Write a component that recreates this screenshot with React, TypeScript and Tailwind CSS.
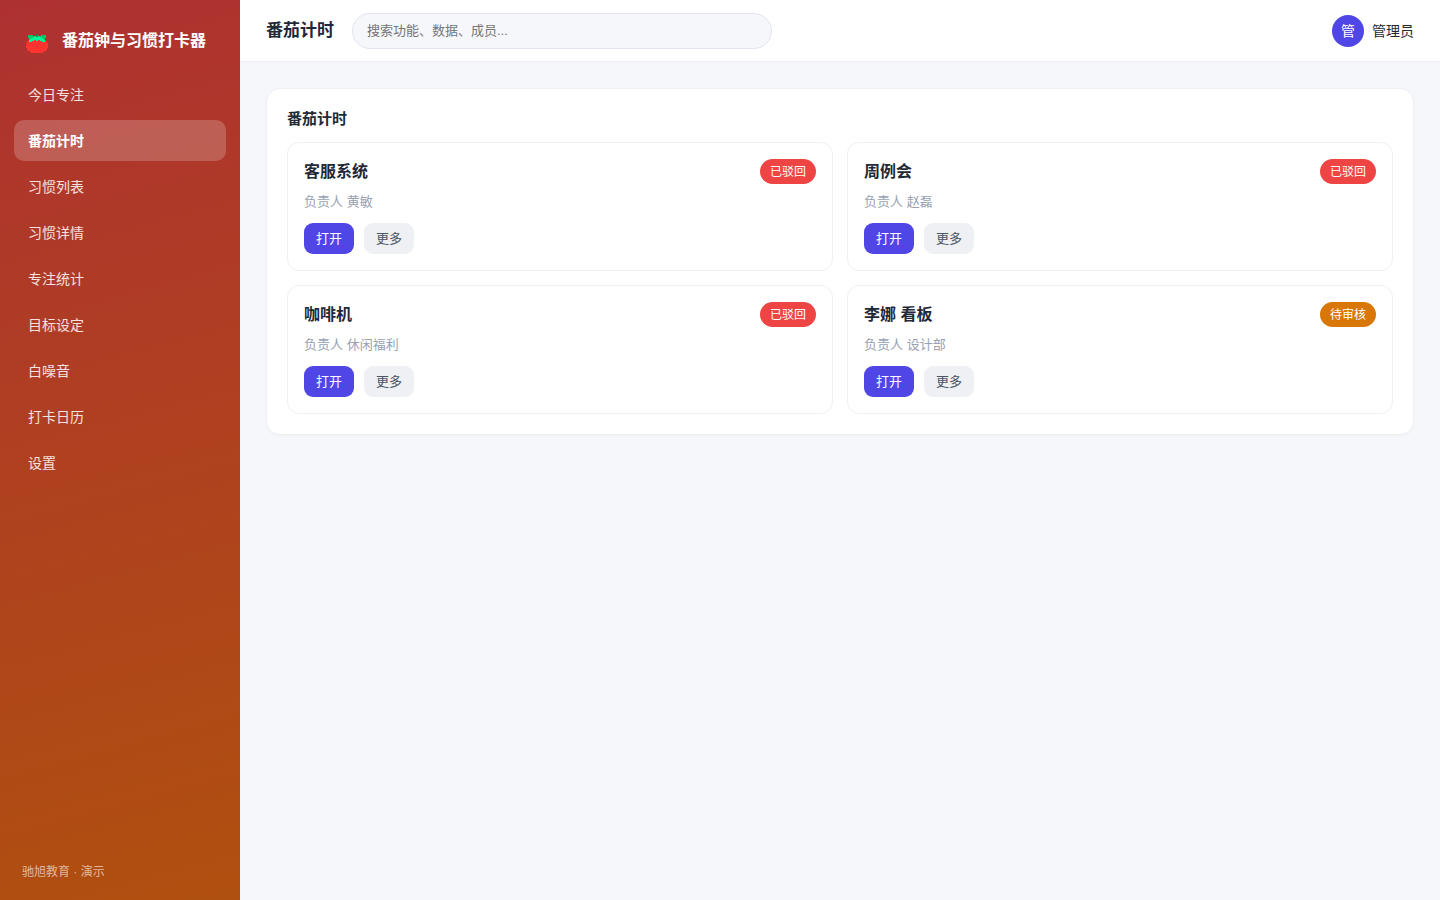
import clsx from "clsx";

interface IRecord {
  id: number;
  title: string;
  owner: string;
  status: "rejected" | "pending";
}

const navItems = [
  "今日专注",
  "番茄计时",
  "习惯列表",
  "习惯详情",
  "专注统计",
  "目标设定",
  "白噪音",
  "打卡日历",
  "设置",
];

const records: IRecord[] = [
  { id: 1, title: "客服系统", owner: "黄敏", status: "rejected" },
  { id: 2, title: "周例会", owner: "赵磊", status: "rejected" },
  { id: 3, title: "咖啡机", owner: "休闲福利", status: "rejected" },
  { id: 4, title: "李娜 看板", owner: "设计部", status: "pending" },
];

const statusMap = {
  rejected: { label: "已驳回", className: "bg-[#ef4444]" },
  pending: { label: "待审核", className: "bg-[#d97706]" },
};

function TomatoIcon() {
  return (
    <svg
      viewBox="0 0 22 20"
      className="h-5 w-[22px] shrink-0 self-end"
      shapeRendering="crispEdges"
      aria-hidden="true"
    >
      <path
        d="M3 5h16v1h1v1h1v2h1v5h-1v2h-1v1h-2v1h-1v1H5v-1H4v-1H2v-1H1v-2H0V9h1V7h1V6h1z"
        fill="#ff332f"
      />
      <path d="M7 2h8v1h2v1h1v1h1v3h-3V7h-2V6h-2v1h-2V6H8v1H6v1H3V5h2V4h1V3h1z" fill="#00f59b" />
      <path d="M2 1h5v1h2v1H7v1H5v1H4v1H3V4H2zM20 1h-5v1h-2v1h2v1h2v1h1v1h1V4h1z" fill="#08c768" />
      <path d="M10 0h2v3h-2z" fill="#078f58" />
    </svg>
  );
}

function Sidebar({ active }: { active: string }) {
  return (
    <aside className="flex w-60 shrink-0 flex-col bg-[linear-gradient(165deg,#ae3131_0%,#b0500f_100%)] px-[14px] pt-7 pb-5 text-white">
      <div className="mb-5 flex h-[26px] items-center gap-[14px] px-3">
        <TomatoIcon />
        <span className="text-base font-bold whitespace-nowrap">番茄钟与习惯打卡器</span>
      </div>
      <nav className="flex flex-col gap-[5px]">
        {navItems.map((item) => (
          <a
            key={item}
            href="#"
            className={clsx(
              "flex h-[41px] items-center rounded-[10px] px-[14px] text-sm",
              item === active ? "bg-white/20 font-bold text-white" : "text-white/85"
            )}
          >
            {item}
          </a>
        ))}
      </nav>
      <div className="mt-auto px-2 text-xs leading-4 text-white/60">驰旭教育 · 演示</div>
    </aside>
  );
}

function Header({ title }: { title: string }) {
  return (
    <header className="flex h-[62px] items-center gap-[18px] border-b border-[#eceef3] bg-white px-[26px]">
      <h1 className="text-[17px] font-bold">{title}</h1>
      <input
        type="search"
        aria-label="搜索"
        placeholder="搜索功能、数据、成员..."
        className="h-9 w-[420px] rounded-full border border-[#e2e5ee] bg-[#f5f7fb] px-[14px] text-[13px] outline-none placeholder:text-[#757575]"
      />
      <div className="ml-auto flex items-center gap-2 text-sm">
        <div className="flex size-8 items-center justify-center rounded-full bg-[#4f46e5] text-white">管</div>
        <span>管理员</span>
      </div>
    </header>
  );
}

function RecordCard({ record }: { record: IRecord }) {
  const status = statusMap[record.status];
  return (
    <article className="rounded-xl border border-[#eef0f4] p-4">
      <div className="flex items-center justify-between">
        <h3 className="text-base font-bold">{record.title}</h3>
        <span
          className={clsx("flex h-[25px] items-center rounded-full px-[10px] text-xs text-white", status.className)}
        >
          {status.label}
        </span>
      </div>
      <p className="mt-2 text-[13px] leading-5 text-[#98a1b2]">负责人 {record.owner}</p>
      <div className="mt-[11px] flex gap-[10px] text-[13px]">
        <button type="button" className="h-[31px] rounded-[9px] bg-[#4f46e5] px-3 text-white">
          打开
        </button>
        <button type="button" className="h-[31px] rounded-[9px] bg-[#eef0f4] px-3 text-[#475569]">
          更多
        </button>
      </div>
    </article>
  );
}

export default function App() {
  return (
    <div className="flex min-h-screen bg-[#f5f7fb] font-['Liberation_Sans','Noto_Sans_CJK_SC',sans-serif] text-[#1f2937]">
      <Sidebar active="番茄计时" />
      <div className="min-w-0 flex-1">
        <Header title="番茄计时" />
        <main className="p-[26px]">
          <section className="rounded-[14px] border border-[#eef0f4] bg-white p-5 shadow-[0_1px_3px_rgba(0,0,0,0.03)]">
            <h2 className="mb-[14px] text-[15px] leading-[19px] font-bold">番茄计时</h2>
            <div className="grid grid-cols-2 gap-[14px]">
              {records.map((record) => (
                <RecordCard key={record.id} record={record} />
              ))}
            </div>
          </section>
        </main>
      </div>
    </div>
  );
}
